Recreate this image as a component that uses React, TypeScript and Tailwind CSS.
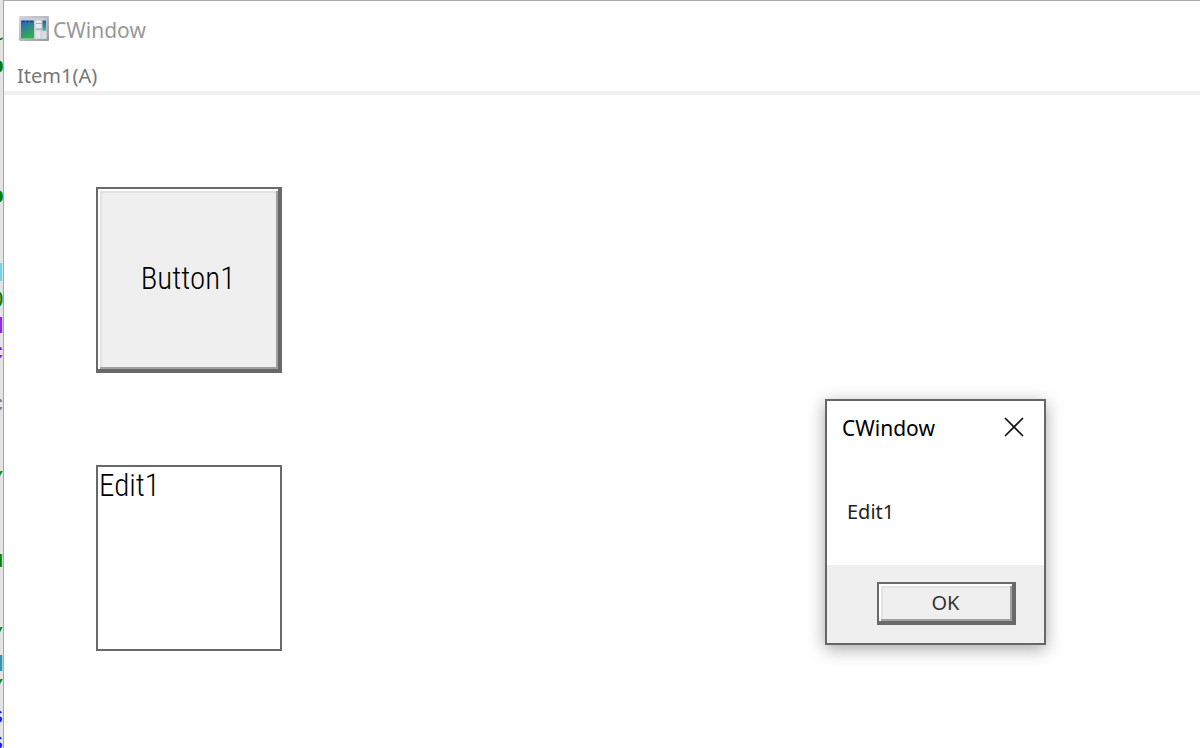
import { useState } from "react";

type CodeLine = { text: string; className: string };

const blank: CodeLine = { text: "", className: "" };
const comment = "text-[#0a7d0a]";

const codeLines: CodeLine[] = [
  blank,
  { text: "~", className: comment },
  { text: "o", className: `${comment} font-bold` },
  blank,
  blank,
  blank,
  blank,
  { text: "o", className: `${comment} font-bold` },
  blank,
  blank,
  { text: "d", className: "text-[#6fd3e8]" },
  { text: "0", className: comment },
  { text: "N", className: "text-[#8020e0]" },
  { text: "c", className: "text-[#8020e0]" },
  blank,
  { text: "c", className: "text-[#808080]" },
  blank,
  blank,
  { text: "/", className: comment },
  blank,
  blank,
  { text: "u", className: comment },
  blank,
  blank,
  { text: "/", className: comment },
  { text: "H", className: "text-[#2b91af]" },
  { text: "/", className: comment },
  { text: "s", className: "text-[#1414e6]" },
  { text: "s", className: "text-[#1414e6]" },
];

function EditorEdge() {
  return (
    <div
      aria-hidden="true"
      className="flex w-[3px] shrink-0 flex-col overflow-hidden bg-[#e3e3e3] pt-0.5 font-['Liberation_Mono',monospace] text-2xl leading-[26px]"
    >
      {codeLines.map((line, i) => (
        <div key={i} className="-mr-px flex h-[26px] shrink-0 justify-end">
          <span className={line.className}>{line.text}</span>
        </div>
      ))}
    </div>
  );
}

function WindowIcon() {
  return (
    <svg width="30" height="25" viewBox="0 0 30 25" aria-hidden="true">
      <defs>
        <linearGradient id="pane" x1="0" y1="0" x2="0.4" y2="1">
          <stop offset="0" stopColor="#2463ad" />
          <stop offset="0.5" stopColor="#2f8791" />
          <stop offset="1" stopColor="#2fae4c" />
        </linearGradient>
        <linearGradient id="bar" x1="0" y1="0" x2="0" y2="1">
          <stop offset="0" stopColor="#245f9c" />
          <stop offset="1" stopColor="#3bb89b" />
        </linearGradient>
        <linearGradient id="frame" x1="0" y1="0" x2="1" y2="1">
          <stop offset="0" stopColor="#d3d7d9" />
          <stop offset="1" stopColor="#98999e" />
        </linearGradient>
      </defs>
      <rect width="30" height="25" rx="1" fill="url(#frame)" />
      <rect x="1.5" y="2" width="26" height="21" fill="#c9ced5" />
      <rect x="2" y="4.5" width="13" height="18" fill="url(#pane)" />
      <path d="M3 5.5h11" stroke="#1c3fb0" strokeWidth="1.6" strokeDasharray="3 1" />
      <rect x="16.5" y="4.5" width="6" height="8" fill="#e9ebee" />
      <path d="M17 7.5h6M17 13h6" stroke="#a9adb5" strokeWidth="1" />
      <rect x="23.5" y="4.5" width="3.5" height="10" fill="url(#bar)" />
      <rect x="16.5" y="14.5" width="5" height="8" fill="#e4e6ec" />
      <rect x="22.5" y="15.5" width="5" height="7" fill="#dadde4" />
    </svg>
  );
}

function MessageBox({ text, onClose }: { text: string; onClose: () => void }) {
  return (
    <div
      role="dialog"
      aria-labelledby="message-title"
      className="absolute top-[398px] right-[154px] flex w-[221px] flex-col border-2 border-[#666] bg-white shadow-[0_4px_16px_rgba(0,0,0,0.35)]"
    >
      <div className="flex h-14 items-center justify-between pr-5 pl-[15px]">
        <h2 id="message-title" className="text-[21px] text-black">
          CWindow
        </h2>
        <button type="button" aria-label="Close" onClick={onClose} className="pb-1">
          <svg width="20" height="20" viewBox="0 0 20 20" aria-hidden="true">
            <path d="M1 1L19 19M19 1L1 19" stroke="#111" strokeWidth="1.7" />
          </svg>
        </button>
      </div>
      <p className="flex h-[108px] items-center pt-0.5 pl-5 text-xl text-[#222]">{text}</p>
      <div className="flex justify-end bg-[#efefef] pt-[17px] pr-7 pb-[18px]">
        <button
          type="button"
          onClick={onClose}
          className="h-[43px] w-[139px] border-2 border-r-4 border-b-4 border-[#696969] bg-[#efefef] text-xl text-[#333] shadow-[inset_2px_2px_0_#fff,inset_-2px_-2px_0_#a0a0a0,inset_4px_4px_0_#e3e3e3]"
        >
          OK
        </button>
      </div>
    </div>
  );
}

export default function App() {
  const [value, setValue] = useState("Edit1");
  const [open, setOpen] = useState(true);

  return (
    <div className="flex h-screen overflow-hidden bg-white font-['Noto_Sans',sans-serif]">
      <EditorEdge />
      <main className="relative flex flex-1 flex-col border-t border-l border-[#a8a8a8] bg-white">
        <header className="flex h-[54px] items-center gap-1 pl-[15px] text-[21px] text-[#999]">
          <WindowIcon />
          <h1 className="pt-1.5">CWindow</h1>
        </header>
        <nav className="flex h-10 items-center border-b-4 border-[#f0f0f0] pt-1.5 pl-[13px] text-xl text-[#777]">
          <button type="button">Item1(A)</button>
        </nav>
        <div className="flex flex-col items-start gap-[92px] pt-[92px] pl-[92px] font-['Roboto_Condensed','Roboto',sans-serif] text-[31px] font-light text-black">
          <button
            type="button"
            onClick={() => setOpen(true)}
            className="size-[186px] border-2 border-r-4 border-b-4 border-[#696969] bg-[#efefef] shadow-[inset_2px_2px_0_#fff,inset_-2px_-2px_0_#a0a0a0,inset_4px_4px_0_#e3e3e3]"
          >
            Button1
          </button>
          <textarea
            aria-label="Edit"
            value={value}
            onChange={(e) => setValue(e.target.value)}
            className="size-[186px] resize-none border-2 border-[#696969] bg-white px-px leading-[38px] outline-none"
          />
        </div>
        {open && <MessageBox text={value} onClose={() => setOpen(false)} />}
      </main>
    </div>
  );
}
